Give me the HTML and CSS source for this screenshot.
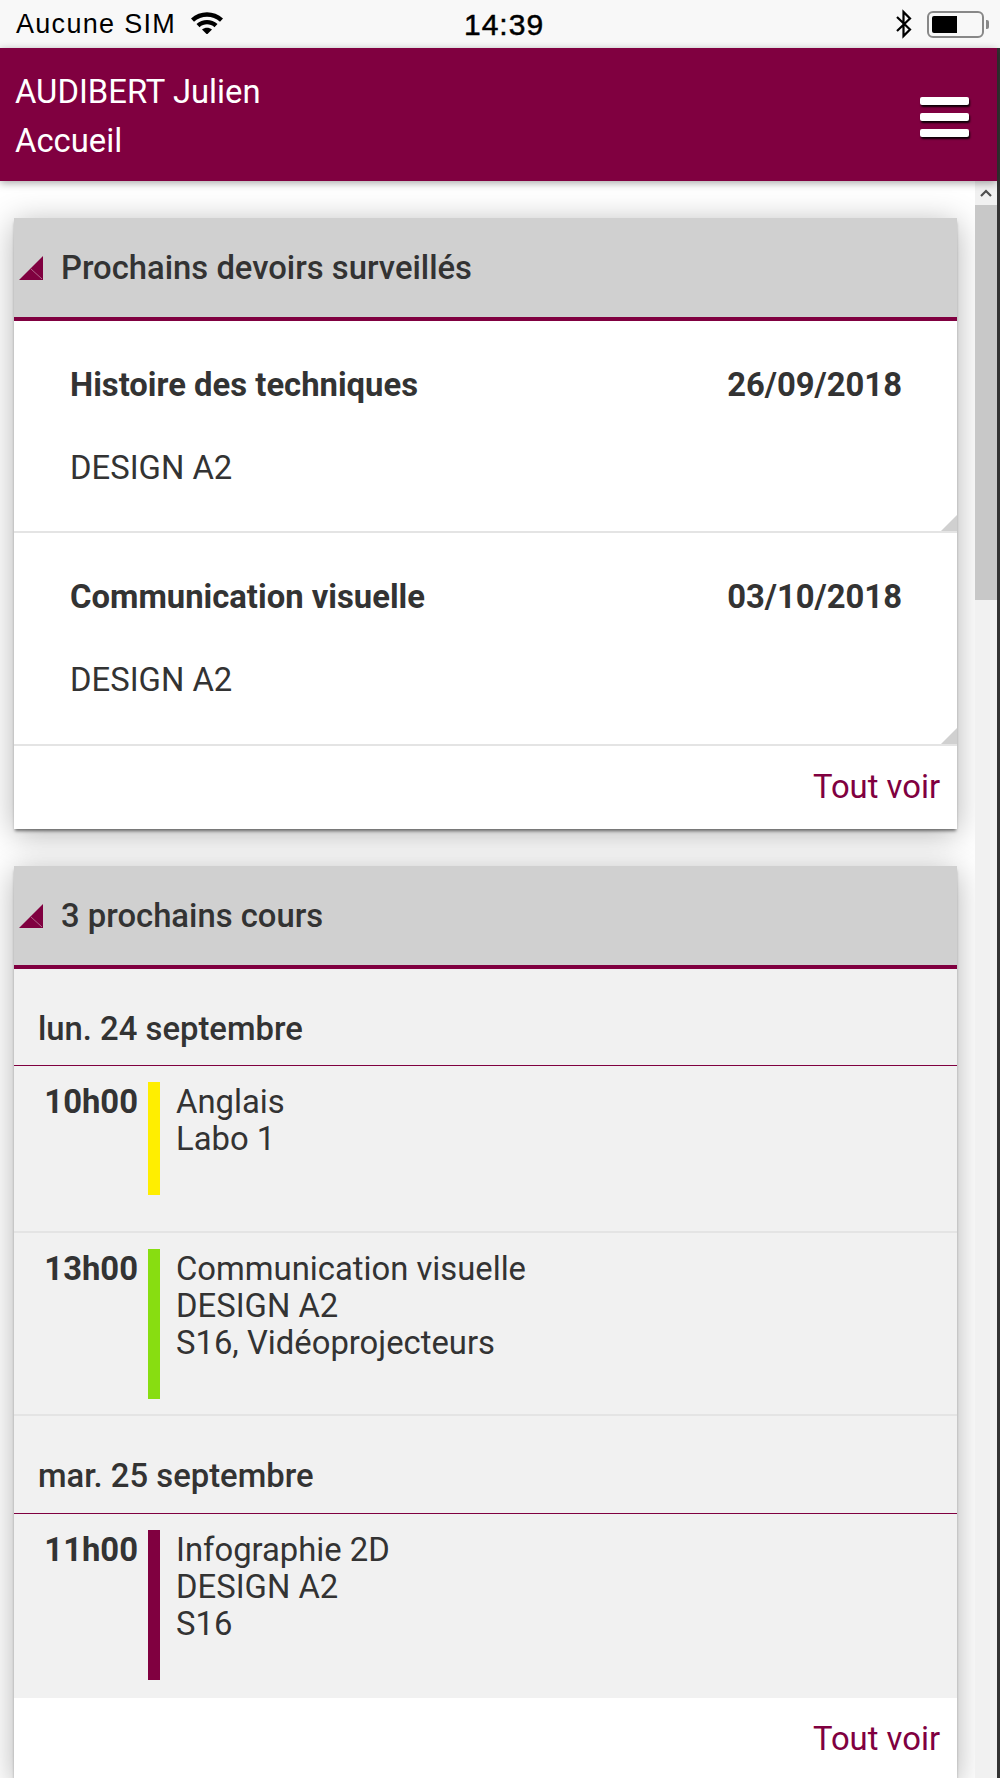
FILE: index.html
```html
<!DOCTYPE html>
<html lang="fr">

<head>
    <meta charset="UTF-8">
    <meta name="viewport" content="width=device-width, initial-scale=1.0">
    <title>Accueil</title>
    <link rel="stylesheet" href="styles.css">
</head>

<body>
    <div class="statusbar">
        <div class="status-left">
            <span>Aucune SIM</span>
            <svg class="wifi" viewBox="0 0 34 24" width="34" height="24">
                <path d="M1 8.5 C10 0 24 0 33 8.5 L30 11.8 C22.5 5 11.5 5 4 11.8 Z" fill="#000"/>
                <path d="M6.5 14 C12.5 8.7 21.5 8.7 27.5 14 L24.5 17.2 C20 13.4 14 13.4 9.5 17.2 Z" fill="#000"/>
                <path d="M12 19.5 C15 17.3 19 17.3 22 19.5 L17 24.5 Z" fill="#000"/>
            </svg>
        </div>
        <span class="status-time">14:39</span>
        <div class="status-right">
            <svg class="bluetooth" viewBox="0 0 18 30" width="18" height="30">
                <path d="M2 8 L15 20.5 L8.5 27 L8.5 3 L15 9.5 L2 22" fill="none" stroke="#000" stroke-width="2.2"/>
            </svg>
            <div class="battery"><div class="battery-level"></div></div>
            <div class="battery-tip"></div>
        </div>
    </div>

    <div class="app">
        <header class="topbar">
            <div class="topbar-title">
                <div>AUDIBERT Julien</div>
                <div>Accueil</div>
            </div>
            <div class="burger">
                <span></span>
                <span></span>
                <span></span>
            </div>
        </header>

        <div class="content-wrap">
            <main class="content">
                <section class="card">
                    <h2 class="card-head">
                        <svg class="corner" viewBox="0 0 24 24" width="24" height="24">
                            <path d="M0 24 L24 0 L24 24 Z" fill="#800040"/>
                            <path d="M12 13 L23 23" stroke="#b0668a" stroke-width="1"/>
                        </svg>
                        Prochains devoirs surveillés
                    </h2>
                    <div class="exam">
                        <div class="exam-top">
                            <span>Histoire des techniques</span>
                            <span>26/09/2018</span>
                        </div>
                        <div class="exam-group">DESIGN A2</div>
                    </div>
                    <div class="exam">
                        <div class="exam-top">
                            <span>Communication visuelle</span>
                            <span>03/10/2018</span>
                        </div>
                        <div class="exam-group">DESIGN A2</div>
                    </div>
                    <div class="card-foot">Tout voir</div>
                </section>

                <section class="card">
                    <h2 class="card-head">
                        <svg class="corner" viewBox="0 0 24 24" width="24" height="24">
                            <path d="M0 24 L24 0 L24 24 Z" fill="#800040"/>
                            <path d="M12 13 L23 23" stroke="#b0668a" stroke-width="1"/>
                        </svg>
                        3 prochains cours
                    </h2>
                    <div class="lessons">
                        <h3 class="day day-first">lun. 24 septembre</h3>
                        <div class="lesson lesson-short">
                            <div class="lesson-time">10h00</div>
                            <div class="lesson-bar bar-yellow"></div>
                            <div class="lesson-text">Anglais<br>Labo 1</div>
                        </div>
                        <div class="lesson">
                            <div class="lesson-time">13h00</div>
                            <div class="lesson-bar bar-green"></div>
                            <div class="lesson-text">Communication visuelle<br>DESIGN A2<br>S16, Vidéoprojecteurs</div>
                        </div>
                        <h3 class="day">mar. 25 septembre</h3>
                        <div class="lesson lesson-last">
                            <div class="lesson-time">11h00</div>
                            <div class="lesson-bar bar-purple"></div>
                            <div class="lesson-text">Infographie 2D<br>DESIGN A2<br>S16</div>
                        </div>
                    </div>
                    <div class="card-foot">Tout voir</div>
                </section>
            </main>

            <div class="scrollbar">
                <div class="scroll-arrow">
                    <svg viewBox="0 0 12 8" width="12" height="8">
                        <path d="M1 7 L6 2 L11 7" fill="none" stroke="#505050" stroke-width="2.2"/>
                    </svg>
                </div>
                <div class="scroll-thumb"></div>
            </div>
        </div>
    </div>
</body>

</html>
```

FILE: styles.css
```css
* {
    box-sizing: border-box;
}

html,
body {
    height: 100%;
}

body {
    margin: 0;
    height: 1778px;
    overflow: hidden;
    display: flex;
    flex-direction: column;
    background-color: #fff;
    color: #333;
    font-family: Roboto, sans-serif;
    font-size: 32.8px;
}

.statusbar {
    height: 48px;
    flex-shrink: 0;
    padding: 0 11px 0 16px;
    display: flex;
    align-items: center;
    justify-content: space-between;
    position: relative;
    background-color: #f8f8f8;
    color: #000;
    font-family: "Liberation Sans", sans-serif;
    font-size: 27px;
    letter-spacing: 1.3px;
}

.status-left {
    display: flex;
    align-items: center;
    gap: 14px;
}

.status-left .wifi {
    margin-top: -5px;
}

.status-time {
    position: absolute;
    left: 464px;
    top: 8px;
    font-size: 30px;
    line-height: 34px;
    letter-spacing: 1px;
    -webkit-text-stroke: 0.5px #000;
}

.status-right {
    display: flex;
    align-items: center;
}

.battery {
    width: 57px;
    height: 27px;
    margin-left: 14px;
    padding: 3px;
    border: 2px solid #888;
    border-radius: 6px;
}

.battery-level {
    width: 25px;
    height: 100%;
    border-radius: 2px 0 0 2px;
    background-color: #000;
}

.battery-tip {
    width: 3px;
    height: 9px;
    margin-left: 2px;
    border-radius: 0 2px 2px 0;
    background-color: #888;
}

.app {
    flex: 1;
    min-height: 0;
    display: flex;
    flex-direction: column;
    border-right: 3px solid #333;
}

.topbar {
    height: 133px;
    flex-shrink: 0;
    padding: 4px 28px 0 15px;
    display: flex;
    align-items: center;
    justify-content: space-between;
    position: relative;
    z-index: 2;
    background-color: #800040;
    color: #fff;
    line-height: 49px;
    box-shadow: 0 2px 8px rgba(0, 0, 0, 0.35);
}

.burger {
    width: 49px;
    display: flex;
    flex-direction: column;
    gap: 8px;
}

.burger span {
    height: 8px;
    border-radius: 2px;
    background-color: #fff;
    box-shadow: 1px 2px 2px rgba(0, 0, 0, 0.9);
}

.content-wrap {
    flex: 1;
    min-height: 0;
    display: flex;
}

.content {
    flex: 1;
    min-width: 0;
    padding: 37px 18px 0 14px;
    display: flex;
    flex-direction: column;
    gap: 37px;
    overflow: hidden;
}

.card {
    flex-shrink: 0;
    background-color: #fff;
    box-shadow: 0 3px 3px -1px rgba(0, 0, 0, 0.5), 0 5px 30px rgba(0, 0, 0, 0.3);
}

.card-head {
    height: 103px;
    margin: 0;
    padding-left: 5px;
    display: flex;
    align-items: center;
    gap: 18px;
    border-bottom: 4px solid #800040;
    background-color: #d0d0d0;
    font-size: 32.8px;
    font-weight: 500;
}

.exam {
    height: 213px;
    padding: 44px 55px 0 56px;
    position: relative;
    border-bottom: 2px solid #e4e4e4;
}

.exam:first-of-type {
    height: 212px;
}

.exam::after {
    content: "";
    position: absolute;
    right: 0;
    bottom: 0;
    border-style: solid;
    border-width: 0 0 16px 16px;
    border-color: transparent transparent #d0d0d0 transparent;
}

.exam-top {
    display: flex;
    justify-content: space-between;
    font-weight: 700;
    line-height: 40px;
}

.exam-group {
    margin-top: 43px;
    line-height: 40px;
}

.card-foot {
    height: 83px;
    padding: 21px 17px 0 0;
    text-align: right;
    color: #800040;
    line-height: 40px;
}

.lessons {
    background-color: #f1f1f1;
}

.day {
    height: 98px;
    margin: 0;
    padding: 40px 0 0 24px;
    border-bottom: 1px solid #800040;
    font-size: 32.8px;
    font-weight: 500;
    line-height: 40px;
}

.day-first {
    height: 97px;
    padding-top: 40px;
}

.lesson {
    height: 183px;
    padding-top: 16px;
    display: flex;
    align-items: flex-start;
    border-bottom: 2px solid #e4e4e4;
    line-height: 37px;
}

.lesson-short {
    height: 167px;
}

.lesson-last {
    height: 184px;
    border-bottom: none;
}

.lesson-time {
    width: 124px;
    padding-top: 2px;
    text-align: right;
    font-weight: 700;
}

.lesson-bar {
    width: 12px;
    height: 150px;
    margin-left: 10px;
}

.lesson-short .lesson-bar {
    height: 113px;
}

.bar-yellow {
    background-color: #ffee00;
}

.bar-green {
    background-color: #88dd11;
}

.bar-purple {
    background-color: #800040;
}

.lesson-text {
    padding: 2px 0 0 16px;
}

.scrollbar {
    width: 22px;
    flex-shrink: 0;
    background-color: #f1f1f1;
}

.scroll-arrow {
    height: 24px;
    padding-top: 8px;
    display: flex;
    justify-content: center;
    align-items: flex-start;
}

.scroll-thumb {
    height: 395px;
    background-color: #c8c8c8;
}
```
